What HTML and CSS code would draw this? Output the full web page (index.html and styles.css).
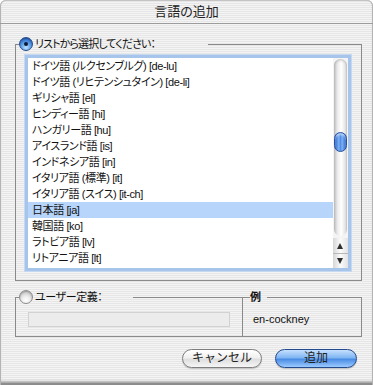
FILE: index.html
```html
<!doctype html>
<html lang="ja">
  <head>
    <meta charset="UTF-8" />
    <title>言語の追加</title>
    <link rel="stylesheet" href="styles.css">
  </head>
  <body>
    <div class="window">
      <div class="titlebar">言語の追加</div>
      <div class="content">
        <fieldset class="group list-group">
          <legend><span class="radio checked"></span>リストから選択してください：</legend>
          <div class="listbox">
            <ul class="lang-list">
              <li>ドイツ語 (ルクセンブルグ) [de-lu]</li>
              <li>ドイツ語 (リヒテンシュタイン) [de-li]</li>
              <li>ギリシャ語 [el]</li>
              <li>ヒンディー語 [hi]</li>
              <li>ハンガリー語 [hu]</li>
              <li>アイスランド語 [is]</li>
              <li>インドネシア語 [in]</li>
              <li>イタリア語 (標準) [it]</li>
              <li>イタリア語 (スイス) [it-ch]</li>
              <li class="selected">日本語 [ja]</li>
              <li>韓国語 [ko]</li>
              <li>ラトビア語 [lv]</li>
              <li>リトアニア語 [lt]</li>
            </ul>
            <div class="scrollbar">
              <div class="track"><div class="thumb"></div></div>
              <div class="arrow up"></div>
              <div class="arrow down"></div>
            </div>
          </div>
        </fieldset>

        <div class="group-row">
          <fieldset class="group custom-group">
            <legend><span class="radio"></span>ユーザー定義：</legend>
            <input type="text" class="custom-input" disabled />
          </fieldset>
          <fieldset class="group example-group">
            <legend>例</legend>
            <div class="example">en-cockney</div>
          </fieldset>
        </div>

        <div class="buttons">
          <button class="btn">キャンセル</button>
          <button class="btn default">追加</button>
        </div>
      </div>
    </div>
  </body>
</html>
```

FILE: styles.css
```css
* {
  box-sizing: border-box;
}

html,
body {
  margin: 0;
}

body {
  font-family: 'Liberation Sans', 'Noto Sans CJK JP', sans-serif;
  font-size: 11px;
  color: #111;
  font-feature-settings: 'palt';
}

.window {
  width: 373px;
  height: 385px;
  overflow: hidden;
  border-radius: 6px 6px 0 0;
  background: repeating-linear-gradient(#f4f4f4 0 1px, #e6e6e6 1px 2px);
  box-shadow: inset 1px 0 0 #b4b4b4, inset -1px 0 0 #b4b4b4, inset 0 1px 0 #c4c4c4,
    inset 0 -4px 3px -1px rgba(0, 0, 0, 0.45);
}

.titlebar {
  height: 24px;
  padding-top: 1px;
  line-height: 22px;
  text-align: center;
  font-size: 13px;
  color: #222;
  border-bottom: 1px solid #9c9c9c;
}

.content {
  padding: 13px 0 0 15px;
}

.group {
  margin: 0;
  min-width: 0;
  border: 1px solid #8a8a8a;
}

.group legend {
  padding: 0;
  height: 14px;
  line-height: 14px;
  white-space: nowrap;
  letter-spacing: -0.4px;
}

.radio {
  display: inline-block;
  vertical-align: top;
  width: 14px;
  height: 14px;
  margin-right: 2px;
  border-radius: 50%;
  border: 1px solid #8d8d8d;
  background: radial-gradient(circle at 50% 78%, #ffffff 0, #eeeeee 35%, #c4c4c4 80%);
  box-shadow: inset 0 1px 1px rgba(0, 0, 0, 0.2);
  position: relative;
}

.radio.checked {
  border-color: #274b86;
  background: radial-gradient(circle at 50% 80%, #b9e2ff 0, #5a9be8 45%, #1e5ab8 90%);
}

.radio.checked::after {
  content: '';
  position: absolute;
  left: 4px;
  top: 4px;
  width: 4px;
  height: 4px;
  border-radius: 50%;
  background: #0c1a33;
}

/* リスト */
.list-group {
  width: 347px;
  padding: 4px 0 9px;
}

.list-group legend {
  margin-left: 3px;
  width: 189px;
  letter-spacing: -0.9px;
}

.listbox {
  display: flex;
  width: 326px;
  height: 216px;
  margin-left: 9px;
  border: 3px solid #a7c4ea;
  background: #fff;
  box-shadow: 0 0 0 1px #c6d9f2;
}

.lang-list {
  width: 305px;
  margin: 0;
  padding: 0;
  list-style: none;
}

.lang-list li {
  height: 16px;
  line-height: 16px;
  padding-left: 4px;
  white-space: nowrap;
  letter-spacing: -0.4px;
}

.lang-list li.selected {
  background: #b7d5fb;
}

.scrollbar {
  width: 15px;
  display: flex;
  flex-direction: column;
  background: #f4f4f4;
}

.track {
  flex: 1;
  margin: 1px 1px 2px;
  border-radius: 7px;
  background: linear-gradient(to right, #b9b9b9, #e9e9e9 25%, #ffffff 55%, #e6e6e6 85%, #c2c2c2);
  box-shadow: inset 0 3px 3px -2px rgba(0, 0, 0, 0.25);
}

.thumb {
  width: 13px;
  height: 20px;
  margin-top: 73px;
  border-radius: 7px;
  border: 1px solid #2650a0;
  background: linear-gradient(to right, #2d64c8, #7eb2f4 35%, #4f8ee6 50%, #7eb2f4 65%, #2d64c8);
  box-shadow: inset 0 2px 2px rgba(255, 255, 255, 0.5);
}

.arrow {
  height: 15px;
  position: relative;
  background: linear-gradient(to right, #d6d6d6, #fbfbfb 50%, #e2e2e2);
}

.arrow.down {
  border-top: 1px solid #b8b8b8;
}

.arrow::before {
  content: '';
  position: absolute;
  left: 4px;
  top: 5px;
  border-left: 3.5px solid transparent;
  border-right: 3.5px solid transparent;
}

.arrow.up::before {
  border-bottom: 6px solid #2e2e2e;
}

.arrow.down::before {
  top: 4px;
  border-top: 6px solid #2e2e2e;
}

/* 下段 */
.group-row {
  display: flex;
  margin-top: 9px;
}

.custom-group {
  width: 228px;
  padding: 8px 0 9px;
}

.custom-group legend {
  margin-left: 3px;
  width: 114px;
}

.custom-input {
  display: block;
  width: 202px;
  height: 15px;
  margin: 0 0 0 12px;
  padding: 0;
  border: 1px solid #d2d2d2;
  background: #ececec;
}

.example-group {
  width: 119px;
  border-left: none;
  padding: 8px 0 9px;
}

.example-group legend {
  margin-left: 7px;
  width: 17px;
  font-weight: bold;
}

.example {
  height: 15px;
  padding-left: 10px;
  line-height: 15px;
}

.buttons {
  display: flex;
  justify-content: flex-end;
  gap: 13px;
  margin-top: 12px;
  padding-right: 16px;
}

.btn {
  width: 80px;
  height: 19px;
  padding: 0;
  font-family: inherit;
  font-size: 12px;
  line-height: 17px;
  color: #222;
  border: 1px solid #7e7e7e;
  border-radius: 10px;
  background: linear-gradient(#ffffff, #f0f0f0 45%, #dedede 55%, #f6f6f6);
  box-shadow: 0 1px 1px rgba(0, 0, 0, 0.2);
}

.btn.default {
  width: 82px;
  border-color: #234a8c;
  background: linear-gradient(#c5e0ff, #80b6f2 45%, #4a8ce4 55%, #9ccbff);
}
```
